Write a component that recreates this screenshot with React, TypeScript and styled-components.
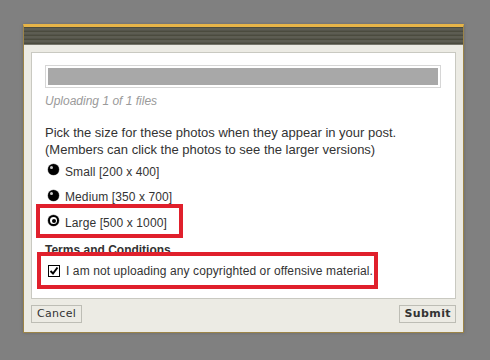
import React from "react";
import styled, { createGlobalStyle } from "styled-components";

const Global = createGlobalStyle`
  html, body { margin: 0; padding: 0; background: #808080; }
  body { width: 490px; height: 360px; overflow: hidden; font-family: "Liberation Sans", Arial, sans-serif; }
`;

const Page = styled.div`
  padding: 24px 0 0 23px;
`;

const Dialog = styled.div`
  width: 439px;
  border: 1px solid #9c8448;
  border-top: 3px solid #e6b448;
  background: #ecebe4;
  box-shadow: 0 0 3px rgba(60, 60, 60, 0.35);
`;

const Header = styled.div`
  height: 17px;
  background: repeating-linear-gradient(
    to bottom,
    #4b4b3e 0px,
    #4b4b3e 1px,
    #5d5d52 1px,
    #5d5d52 3px,
    #54544a 3px,
    #54544a 4px
  );
  border-bottom: 1px solid #76766c;
`;

const Body = styled.div`
  padding: 7px 7px 9px 7px;
`;

const Panel = styled.div`
  position: relative;
  background: #ffffff;
  border: 1px solid #c9c9c1;
  height: 247px;
  padding: 12px 14px 0 13px;
  box-sizing: border-box;
`;

const Progress = styled.div`
  width: 396px;
  height: 23px;
  box-sizing: border-box;
  border: 1px solid #d6d6d6;
  padding: 2px;
`;

const ProgressFill = styled.div`
  height: 100%;
  background: #a8a8a8;
`;

const Status = styled.div`
  margin-top: 6px;
  font-size: 12px;
  font-style: italic;
  color: #9a9a9a;
  line-height: 14px;
`;

const Prompt = styled.div`
  margin-top: 16px;
  font-size: 13px;
  color: #333333;
  line-height: 17px;
  white-space: nowrap;
`;

const Options = styled.div`
  margin-top: 6px;
  display: flex;
  flex-direction: column;
  gap: 10.5px;
  padding-left: 3px;
`;

const OptionRow = styled.label`
  display: flex;
  align-items: center;
  gap: 6px;
  height: 15px;
  font-size: 12px;
  letter-spacing: 0.1px;
  color: #333333;
`;

const Radio = styled.span<{ $checked?: boolean }>`
  width: 11px;
  height: 11px;
  border-radius: 50%;
  box-sizing: border-box;
  margin-top: -4px;
  position: relative;
  background: ${(p) => (p.$checked ? "#ffffff" : "#000000")};
  border: ${(p) => (p.$checked ? "2px solid #000000" : "none")};
  box-shadow: 0 0 0 0.5px #9a9a9a;
  &::after {
    content: "";
    position: absolute;
    border-radius: 50%;
    ${(p) =>
      p.$checked
        ? `left: 1.5px; top: 1.5px; width: 4px; height: 4px; background: #000;`
        : `left: 2px; top: 2px; width: 3px; height: 3px; background: rgba(255,255,255,0.8);`}
  }
`;

const TermsTitle = styled.div`
  margin-top: 12.5px;
  font-size: 12px;
  font-weight: bold;
  color: #333333;
  line-height: 14px;
`;

const CheckRow = styled.label`
  margin-top: 7px;
  padding-left: 3px;
  display: flex;
  align-items: center;
  gap: 6px;
  font-size: 12px;
  letter-spacing: 0.1px;
  color: #333333;
  height: 14px;
`;

const Checkbox = styled.span`
  width: 12px;
  height: 12px;
  box-sizing: border-box;
  border: 1px solid #000;
  background: #fff;
  display: flex;
  align-items: center;
  justify-content: center;
`;

const Annotation = styled.div<{ $l: number; $t: number; $w: number; $h: number }>`
  position: absolute;
  left: ${(p) => p.$l}px;
  top: ${(p) => p.$t}px;
  width: ${(p) => p.$w}px;
  height: ${(p) => p.$h}px;
  box-sizing: border-box;
  border: 4px solid #e0202c;
  pointer-events: none;
`;

const Footer = styled.div`
  display: flex;
  justify-content: space-between;
  margin-top: 6px;
`;

const Button = styled.button<{ $primary?: boolean }>`
  height: 18px;
  box-sizing: border-box;
  border: 1px solid #bdbdb5;
  background: #ecebe4;
  padding: 0 ${(p) => (p.$primary ? 4 : 5)}px;
  font-family: "DejaVu Sans", Verdana, sans-serif;
  font-size: 11px;
  font-weight: ${(p) => (p.$primary ? "bold" : "normal")};
  color: #333333;
  line-height: 16px;
  letter-spacing: ${(p) => (p.$primary ? "0.4px" : "0.3px")};
`;

export default function App() {
  return (
    <>
      <Global />
      <Page>
        <Dialog>
          <Header />
          <Body>
            <Panel>
              <Progress>
                <ProgressFill />
              </Progress>
              <Status>Uploading 1 of 1 files</Status>
              <Prompt>
                Pick the size for these photos when they appear in your post.
                <br />
                (Members can click the photos to see the larger versions)
              </Prompt>
              <Options>
                <OptionRow>
                  <Radio />
                  Small [200 x 400]
                </OptionRow>
                <OptionRow>
                  <Radio />
                  Medium [350 x 700]
                </OptionRow>
                <OptionRow>
                  <Radio $checked />
                  Large [500 x 1000]
                </OptionRow>
              </Options>
              <TermsTitle>Terms and Conditions</TermsTitle>
              <CheckRow>
                <Checkbox>
                  <svg width="10" height="10" viewBox="0 0 10 10">
                    <path d="M1.5 5 L4 7.5 L8.5 1.5" stroke="#000" strokeWidth="2" fill="none" />
                  </svg>
                </Checkbox>
                I am not uploading any copyrighted or offensive material.
              </CheckRow>
              <Annotation $l={4} $t={151} $w={147} $h={34} />
              <Annotation $l={5} $t={199} $w={341} $h={37} />
            </Panel>
            <Footer>
              <Button>Cancel</Button>
              <Button $primary>Submit</Button>
            </Footer>
          </Body>
        </Dialog>
      </Page>
    </>
  );
}
